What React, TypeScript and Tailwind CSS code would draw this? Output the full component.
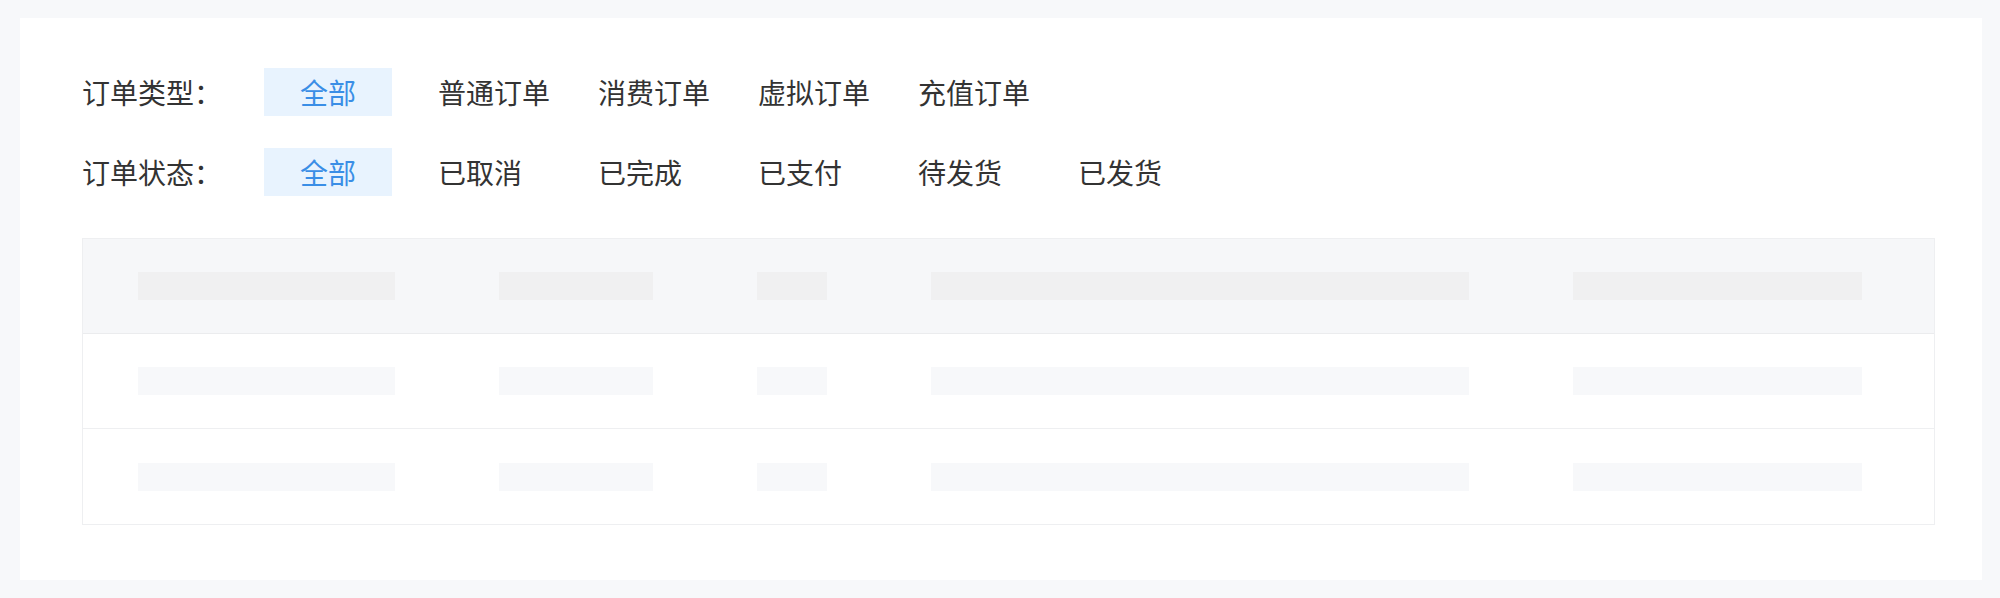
import React from "react";

const typeItems = ["普通订单", "消费订单", "虚拟订单", "充值订单"];
const statusItems = ["已取消", "已完成", "已支付", "待发货", "已发货"];

function FilterRow({ label, items }: { label: string; items: string[] }) {
  return (
    <div className="flex items-center h-[48px]">
      <div className="w-[182px] text-[28px] leading-[48px] text-[#333333]">{label}</div>
      <div className="flex gap-[32px]">
        <div className="w-[128px] h-[48px] bg-[#e8f3fe] text-[#3a8ee6] text-[28px] leading-[48px] text-center">
          全部
        </div>
        {items.map((t) => (
          <div
            key={t}
            className="w-[128px] h-[48px] pl-[14px] text-[#333333] text-[28px] leading-[48px] whitespace-nowrap"
          >
            {t}
          </div>
        ))}
      </div>
    </div>
  );
}

function Bars({ color }: { color: string }) {
  const widths = [257, 154, 70, 538, 289];
  return (
    <div className="flex items-center gap-[104px] pl-[55px]">
      {widths.map((w, i) => (
        <div key={i} className={`h-[28px] ${color}`} style={{ width: w }} />
      ))}
    </div>
  );
}

export default function App() {
  return (
    <div
      className="w-[2000px] h-[598px] bg-[#f7f8fa] pt-[18px] pl-[20px] pr-[18px] pb-[18px]"
      style={{ fontFamily: '"Noto Sans CJK SC", "Noto Sans", sans-serif' }}
    >
      <div className="bg-white h-[562px] pl-[62px] pr-[47px] pt-[50px]">
        <div className="flex flex-col gap-[32px]">
          <FilterRow label="订单类型：" items={typeItems} />
          <FilterRow label="订单状态：" items={statusItems} />
        </div>
        <div className="mt-[42px] border border-[#eeeff1]">
          <div className="h-[95px] bg-[#f6f7f9] border-b border-[#ebecee] flex items-center">
            <div className="w-full">
              <Bars color="bg-[#f0f0f1]" />
            </div>
          </div>
          <div className="h-[95px] border-b border-[#eeeff1] flex items-center">
            <div className="w-full">
              <Bars color="bg-[#f7f8fa]" />
            </div>
          </div>
          <div className="h-[95px] flex items-center">
            <div className="w-full">
              <Bars color="bg-[#f7f8fa]" />
            </div>
          </div>
        </div>
      </div>
    </div>
  );
}
